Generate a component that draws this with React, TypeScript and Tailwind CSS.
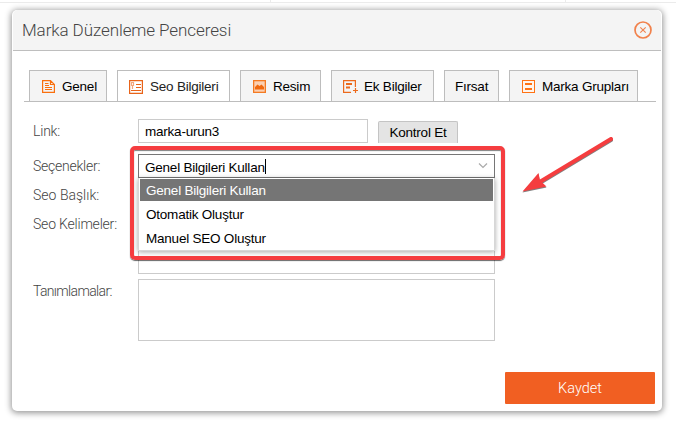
import React from 'react';

type IconName = 'page' | 'seo' | 'image' | 'add' | 'group';

function TabIcon({ name }: { name: IconName }) {
  const common = { fill: 'none', stroke: '#f9700f', strokeWidth: 1.2 };
  switch (name) {
    case 'page':
      return (
        <svg width="13" height="13" viewBox="0 0 13 13" className="shrink-0" {...common}>
          <path d="M.6 .6H8.5L12.4 4.5V12.4H.6ZM8.5 .6V4.5H12.4M3 3.5H6.5M3 5.5H7M3 7.5H10M3 9.5H10" />
        </svg>
      );
    case 'seo':
      return (
        <svg width="14" height="14" viewBox="0 0 14 14" className="shrink-0" {...common}>
          <path d="M.6 .6H13.4V13.4H.6ZM7 4.5H12M7 7.5H12M2 10.5H12" stroke="#e8641a" />
          <path d="M2.5 2.5H4.5V5.5H2.5ZM3.5 6V9" stroke="#f3a67c" />
        </svg>
      );
    case 'image':
      return (
        <svg width="13" height="13" viewBox="0 0 13 13" className="shrink-0">
          <path d="M0 0H13V13H0Z" fill="#f47a22" />
          <path d="M1.3 1.3H11.7V11.7H1.3Z" fill="#fbd0b2" />
          <path d="M2 9.5V7L4.5 4.5L6.5 6L8.5 4.5L11 7V9.5Z" fill="#f0690f" />
        </svg>
      );
    case 'add':
      return (
        <svg width="16" height="14" viewBox="0 0 16 14" className="shrink-0" {...common} stroke="#ec6a1c">
          <path d="M12.4 7V.6H.6V12.4H8M10 10.5H15M12.5 8V13" />
          <path d="M3 4H9M3 7.5H7" strokeWidth="2" />
        </svg>
      );
    default:
      return (
        <svg width="13" height="13" viewBox="0 0 13 13" className="shrink-0" shapeRendering="crispEdges">
          <path d="M.5 .5H12.5V12.5H.5Z" fill="#fff5ec" stroke="#ff7214" />
          <path d="M3 3H10V5H3ZM3 8H10V10H3Z" fill="#ff7214" />
        </svg>
      );
  }
}

const tabs: { label: string; icon?: IconName; box: string; active?: boolean }[] = [
  { label: 'Genel', icon: 'page', box: 'w-[78px] pl-3 gap-[7px]' },
  { label: 'Seo Bilgileri', icon: 'seo', box: 'w-[113px] pl-[11px] gap-[7px]', active: true },
  { label: 'Resim', icon: 'image', box: 'w-[81px] pl-3 gap-[7px]' },
  { label: 'Ek Bilgiler', icon: 'add', box: 'w-[103px] pl-[11px] gap-[5px]' },
  { label: 'Fırsat', box: 'w-[55px] pl-[10px]' },
  { label: 'Marka Grupları', icon: 'group', box: 'w-[129px] pl-3 gap-[7px]' },
];

function Label({ children, spacing = 'tracking-[-0.2px]' }: { children: React.ReactNode; spacing?: string }) {
  return (
    <label className={`block w-[105px] shrink-0 font-['Roboto','Liberation_Sans',sans-serif] text-[14px] font-light leading-4 text-[#444] ${spacing}`}>
      {children}
    </label>
  );
}

export default function App() {
  return (
    <div className="relative h-[425px] w-[676px] overflow-hidden bg-white font-['Liberation_Sans',Arial,sans-serif] text-[13.5px] leading-4 tracking-[-0.22px] text-black">
      <div className="flex h-[3px] border-b border-[#ebebeb]">
        <div className="w-[271px] border-r border-[#ebebeb]" />
        <div className="w-[295px] border-r border-[#ebebeb]" />
      </div>

      <section className="ml-3 mt-[7px] flex h-[401px] w-[650px] flex-col rounded-[5px] bg-white shadow-[0_1px_6px_1px_rgba(0,0,0,0.42)]">
        <header className="mx-px flex h-[41px] shrink-0 items-center justify-between rounded-t-[5px] border-b border-[#bebebe] bg-[#f4f4f4] pl-[9px] pr-[9px]">
          <h1 className="font-['Roboto','Liberation_Sans',sans-serif] text-[17px] font-light leading-5 tracking-[-0.09px] text-[#444]">Marka Düzenleme Penceresi</h1>
          <button aria-label="Kapat" className="block">
            <svg width="18" height="18" viewBox="0 0 18 18" fill="none" stroke="#f1814b">
              <circle cx="9" cy="9" r="8" strokeWidth="1.7" />
              <path d="M6.3 6.3L11.7 11.7M11.7 6.3L6.3 11.7" strokeWidth="1.1" />
            </svg>
          </button>
        </header>

        <nav className="ml-3 mt-[19px] flex h-8 w-[632px] shrink-0 gap-[10px] border-b border-[#bdbdbd] pl-[5px]">
          {tabs.map((t) => (
            <div
              key={t.label}
              className={`flex shrink-0 items-center whitespace-nowrap border border-b-0 border-[#bdbdbd] pt-px ${t.box} ${t.active ? 'bg-white text-[#222]' : 'bg-[#f4f4f4]'}`}
            >
              {t.icon && <TabIcon name={t.icon} />}
              <span>{t.label}</span>
            </div>
          ))}
        </nav>

        <form className="flex flex-col pl-[21px]">
          <div className="mt-[17px] flex h-6 items-center">
            <Label>Link:</Label>
            <div className="flex h-6 w-[230px] items-center border border-[#cbcbcb] pl-[6px] pt-[2px]">marka-urun3</div>
            <div className="ml-[10px] mt-[2px] flex h-[22px] w-20 items-center justify-center rounded-t-[2px] border border-b-0 border-[#c4c4c4] bg-[#e4e4e4]">
              Kontrol Et
            </div>
          </div>

          <div className="relative mt-[11px] flex h-6 items-center">
            <Label spacing="tracking-[-0.25px]">Seçenekler:</Label>
            <div className="flex h-6 w-[357px] items-center border border-[#767676] pl-[6px] pr-[6px]">
              <span className="pt-[3px]">Genel Bilgileri Kullan</span>
              <i className="h-[15px] w-px bg-black" />
              <svg className="ml-auto" width="10" height="8" viewBox="0 0 10 8" fill="none" stroke="#aaa" strokeWidth="1.2">
                <path d="M1 1.5L5 5.5L9 1.5" />
              </svg>
            </div>
            <ul className="absolute left-[105px] top-6 z-10 h-[73px] w-[357px] border border-t-0 border-[#d7d7d7] bg-white px-px pt-px shadow-[0_1px_5px_rgba(0,0,0,0.35)]">
              <li className="flex h-[22px] items-center bg-[#757575] pl-[6px] pt-px text-white">Genel Bilgileri Kullan</li>
              <li className="flex h-6 items-center pl-[6px] pt-[3px]">Otomatik Oluştur</li>
              <li className="flex h-6 items-center pl-[6px] pt-[3px]">Manuel SEO Oluştur</li>
            </ul>
          </div>

          <div className="mt-[5px] flex h-6 items-center">
            <Label spacing="tracking-[0.02px]">Seo Başlık:</Label>
            <div className="h-6 w-[357px] border border-[#cbcbcb]" />
          </div>

          <div className="mt-[5px] flex h-[62px]">
            <div className="pt-1"><Label>Seo Kelimeler:</Label></div>
            <div className="h-[62px] w-[357px] border border-[#cbcbcb]" />
          </div>

          <div className="mt-[5px] flex h-[62px]">
            <div className="pt-1"><Label spacing="tracking-[-0.65px]">Tanımlamalar:</Label></div>
            <div className="h-[62px] w-[357px] border border-[#cbcbcb]" />
          </div>
        </form>

        <button className="ml-auto mr-[7px] mt-[31px] h-8 w-[150px] rounded-[1px] bg-[#f15f22] pt-px font-['Roboto','Liberation_Sans',sans-serif] text-[14.5px] font-light tracking-normal text-white">Kaydet</button>
      </section>

      <div className="absolute left-[130px] top-[146px] z-20 h-[114px] w-[375px] rounded-[5px] border-4 border-[#f53d40] shadow-[0_1px_1px_rgba(0,0,0,0.6),inset_0_1px_1px_rgba(0,0,0,0.5)]" />
      <svg className="absolute left-[518px] top-[130px] z-20 drop-shadow-[0_1px_0.5px_rgba(0,0,0,0.5)]" width="100" height="68" viewBox="0 0 100 68">
        <path d="M93 9L20 53" stroke="#f53d3f" strokeWidth="4" strokeLinecap="round" />
        <path d="M4.5 61.5L20.5 43L22 50.5L28.5 56.5Z" fill="#f53d3f" />
      </svg>
    </div>
  );
}
